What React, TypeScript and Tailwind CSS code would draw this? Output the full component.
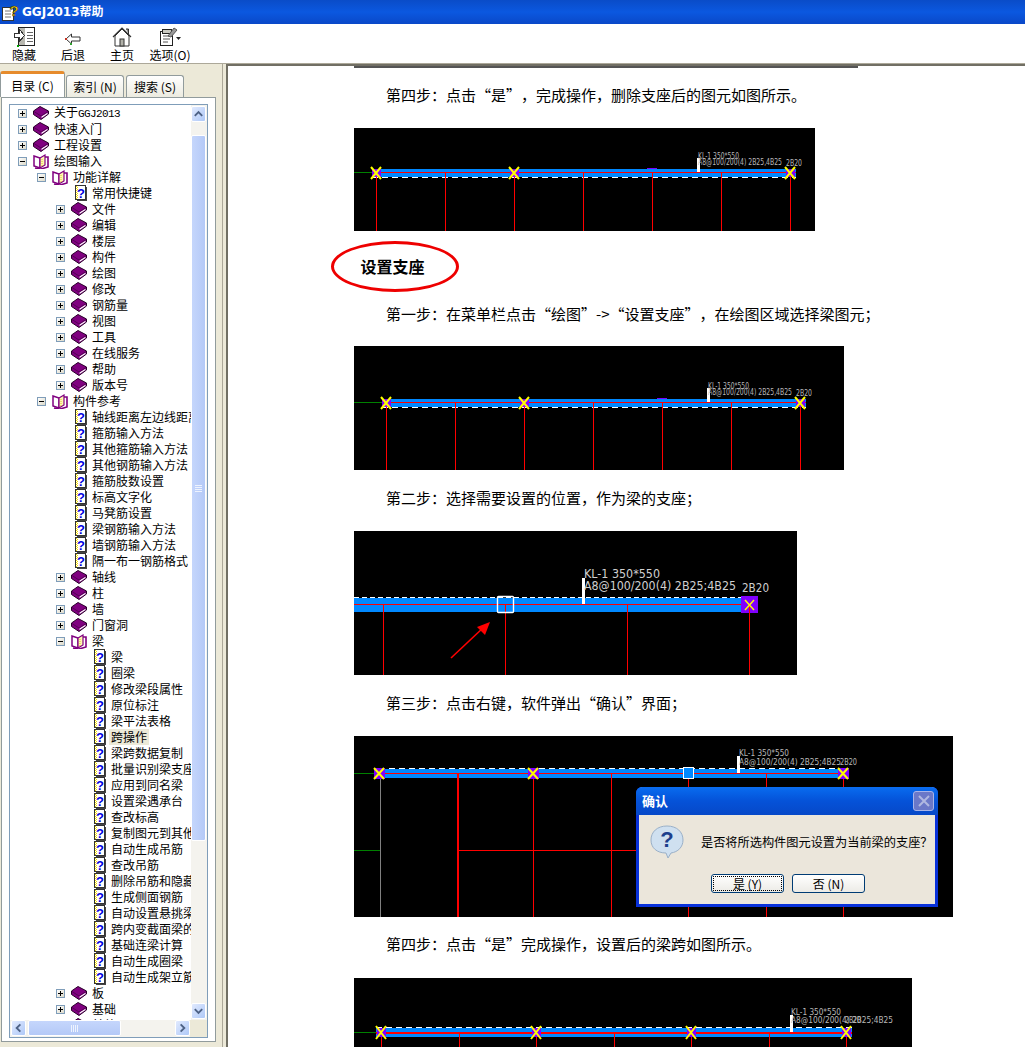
import type { ReactNode } from "react";

type TreeRow = [number, "book" | "open" | "page", ReactNode, boolean?];

const treeRows: TreeRow[] = [
  [0, "book", <>关于<span className="font-['Liberation_Mono',monospace] text-[11px] tracking-[-0.6px]">GGJ2013</span></>],
  [0, "book", "快速入门"],
  [0, "book", "工程设置"],
  [0, "open", "绘图输入"],
  [1, "open", "功能详解"],
  [2, "page", "常用快捷键"],
  [2, "book", "文件"],
  [2, "book", "编辑"],
  [2, "book", "楼层"],
  [2, "book", "构件"],
  [2, "book", "绘图"],
  [2, "book", "修改"],
  [2, "book", "钢筋量"],
  [2, "book", "视图"],
  [2, "book", "工具"],
  [2, "book", "在线服务"],
  [2, "book", "帮助"],
  [2, "book", "版本号"],
  [1, "open", "构件参考"],
  [2, "page", "轴线距离左边线距离"],
  [2, "page", "箍筋输入方法"],
  [2, "page", "其他箍筋输入方法"],
  [2, "page", "其他钢筋输入方法"],
  [2, "page", "箍筋肢数设置"],
  [2, "page", "标高文字化"],
  [2, "page", "马凳筋设置"],
  [2, "page", "梁钢筋输入方法"],
  [2, "page", "墙钢筋输入方法"],
  [2, "page", "隔一布一钢筋格式"],
  [2, "book", "轴线"],
  [2, "book", "柱"],
  [2, "book", "墙"],
  [2, "book", "门窗洞"],
  [2, "open", "梁"],
  [3, "page", "梁"],
  [3, "page", "圈梁"],
  [3, "page", "修改梁段属性"],
  [3, "page", "原位标注"],
  [3, "page", "梁平法表格"],
  [3, "page", "跨操作", true],
  [3, "page", "梁跨数据复制"],
  [3, "page", "批量识别梁支座"],
  [3, "page", "应用到同名梁"],
  [3, "page", "设置梁遇承台"],
  [3, "page", "查改标高"],
  [3, "page", "复制图元到其他"],
  [3, "page", "自动生成吊筋"],
  [3, "page", "查改吊筋"],
  [3, "page", "删除吊筋和隐藏"],
  [3, "page", "生成侧面钢筋"],
  [3, "page", "自动设置悬挑梁"],
  [3, "page", "跨内变截面梁的"],
  [3, "page", "基础连梁计算"],
  [3, "page", "自动生成圈梁"],
  [3, "page", "自动生成架立筋"],
  [2, "book", "板"],
  [2, "book", "基础"],
  [2, "book", "其他"],
];

const levelPadding = ["pl-[8px]", "pl-[27px]", "pl-[46px]", "pl-[65px]"];

function BookIcon() {
  return (
    <svg width="16" height="14" viewBox="0 0 16 14">
      <polygon points="0.5,5 7,0.5 15.5,5 15.5,8 8,13.5 0.5,8.5" fill="#800080" stroke="#2a002a" strokeWidth="1" />
      <polygon points="8.5,10.5 14.5,6.8 14.5,8 8.5,12" fill="#ffffff" />
      <path d="M1 5.5 L8 10 L15 5.5" fill="none" stroke="#4a004a" strokeWidth="0.8" />
    </svg>
  );
}

function OpenBookIcon() {
  return (
    <svg width="16" height="15" viewBox="0 0 16 15">
      <path d="M1 2 L7 4 L7 14 L1 12 Z" fill="#ffffff" stroke="#800080" strokeWidth="1.5" />
      <path d="M7 4 L12 1 L12 11 L7 14 Z" fill="#fff8b0" stroke="#800080" strokeWidth="1.2" />
      <path d="M12 3 L15 3 L15 13 L8 15" fill="none" stroke="#800080" strokeWidth="1.6" />
      <path d="M2 14 L7 15" fill="none" stroke="#800080" strokeWidth="1.6" />
      <path d="M9 5v7" stroke="#d8c030" strokeWidth="1" strokeDasharray="1 1" />
    </svg>
  );
}

function PageIcon() {
  return (
    <svg width="16" height="16" viewBox="0 0 16 16" shapeRendering="crispEdges">
      <rect x="4.5" y="0.5" width="10" height="14" fill="#ffffff" stroke="#333333" />
      <rect x="15" y="2" width="1" height="14" fill="#444444" />
      <rect x="6" y="15" width="10" height="1" fill="#444444" />
      <path d="M6 2h1v1h-1zM6 4h1v1h-1zM6 6h1v1h-1zM6 8h1v1h-1zM6 10h1v1h-1zM6 12h1v1h-1zM5 1h1v1h-1zM5 3h1v1h-1zM5 5h1v1h-1zM5 7h1v1h-1zM5 9h1v1h-1zM5 11h1v1h-1zM5 13h1v1h-1z" fill="#f4e000" />
      <text x="10" y="12.5" textAnchor="middle" fontSize="13" fontWeight="700" fill="#0000e0" fontFamily="Liberation Sans, sans-serif">?</text>
    </svg>
  );
}

function Expander({ open }: { open: boolean }) {
  return (
    <div className="relative h-[9px] w-[9px] border border-[#7f9db9] bg-linear-to-br from-white to-[#dcd9c8]">
      <div className="absolute left-[1px] top-[3px] h-px w-[5px] bg-black" />
      {!open && <div className="absolute left-[3px] top-[1px] h-[5px] w-px bg-black" />}
    </div>
  );
}

function TreeItem({ row }: { row: TreeRow }) {
  const [level, kind, label, selected] = row;
  return (
    <div className={`flex h-4 items-center whitespace-nowrap ${levelPadding[level]}`}>
      <div className="flex w-[9px] shrink-0 justify-center">
        {kind !== "page" && <Expander open={kind === "open"} />}
      </div>
      <div className="ml-[6px] flex w-4 shrink-0 items-center justify-center">
        {kind === "book" && <BookIcon />}
        {kind === "open" && <OpenBookIcon />}
        {kind === "page" && <PageIcon />}
      </div>
      <span className={selected ? "ml-[3px] bg-[#ece9d8] px-[2px] text-[12px] leading-4" : "ml-[5px] text-[12px] leading-4"}>
        {label}
      </span>
    </div>
  );
}

function ScrollButton({ dir }: { dir: "up" | "down" | "left" | "right" }) {
  const points = {
    up: "3,9 7,5 11,9",
    down: "3,5 7,9 11,5",
    left: "9,3 5,7 9,11",
    right: "5,3 9,7 5,11",
  }[dir];
  return (
    <div className="flex h-[16px] w-[15px] shrink-0 items-center justify-center rounded-[2px] border border-white bg-linear-to-br from-[#e1eafe] to-[#aec8f7]">
      <svg width="14" height="14" viewBox="0 0 14 14">
        <polyline points={points} fill="none" stroke="#4d6185" strokeWidth="2" />
      </svg>
    </div>
  );
}

function Sidebar() {
  return (
    <div className="flex w-[222px] shrink-0 flex-col bg-[#ece9d8] pt-[8px]">
      <div className="relative z-10 flex h-[25px] items-end text-[12px]">
        <div className="flex h-[26px] w-[65px] items-center justify-center rounded-t-[3px] border-x border-[#919b9c] border-t-[3px] border-t-[#e68b2c] bg-white">
          目录 (C)
        </div>
        <div className="ml-px flex h-[22px] w-[58px] items-center justify-center rounded-t-[3px] border-x border-t border-[#919b9c] bg-linear-to-b from-white to-[#ecebe0]">
          索引 (N)
        </div>
        <div className="ml-[2px] flex h-[22px] w-[58px] items-center justify-center rounded-t-[3px] border-x border-t border-[#919b9c] bg-linear-to-b from-white to-[#ecebe0]">
          搜索 (S)
        </div>
      </div>
      <div className="ml-px h-[945px] w-[215px] border border-[#919b9c] bg-white px-[7px] pt-[6px]">
        <div className="flex h-[934px] flex-col border border-[#7f9db9] bg-white">
          <div className="flex min-h-0 flex-1">
            <div className="min-w-0 flex-1 overflow-hidden pt-0">
              {treeRows.map((row, i) => (
                <TreeItem key={i} row={row} />
              ))}
            </div>
            <div className="flex w-[16px] shrink-0 flex-col bg-[#f4f3ee] py-px">
              <ScrollButton dir="up" />
              <div className="mt-[13px] flex h-[706px] w-[15px] items-center justify-center rounded-[2px] border border-white bg-linear-to-r from-[#c5d6fc] to-[#b4c9f7]">
                <div className="flex flex-col gap-px">
                  <div className="h-px w-[7px] bg-[#eef3fe]" />
                  <div className="h-px w-[7px] bg-[#eef3fe]" />
                  <div className="h-px w-[7px] bg-[#eef3fe]" />
                  <div className="h-px w-[7px] bg-[#eef3fe]" />
                </div>
              </div>
              <div className="flex-1" />
              <ScrollButton dir="down" />
            </div>
          </div>
          <div className="flex h-[17px] shrink-0 bg-[#f4f3ee] pl-px">
            <ScrollButton dir="left" />
            <div className="ml-[2px] flex h-[16px] w-[93px] items-center justify-center rounded-[2px] border border-white bg-linear-to-b from-[#c5d6fc] to-[#b4c9f7]">
              <div className="flex gap-px">
                <div className="h-[7px] w-px bg-[#eef3fe]" />
                <div className="h-[7px] w-px bg-[#eef3fe]" />
                <div className="h-[7px] w-px bg-[#eef3fe]" />
                <div className="h-[7px] w-px bg-[#eef3fe]" />
              </div>
            </div>
            <div className="flex-1" />
            <ScrollButton dir="right" />
            <div className="w-[17px] shrink-0 bg-[#ece9d8]" />
          </div>
        </div>
      </div>
    </div>
  );
}

function ToolButton({ label, icon, className }: { label: string; icon: ReactNode; className: string }) {
  return (
    <div className={`flex flex-col items-center ${className}`}>
      <div className="flex h-[22px] items-end">{icon}</div>
      <span className="whitespace-nowrap text-[12px] leading-4">{label}</span>
    </div>
  );
}

function HideIcon() {
  return (
    <svg width="21" height="20" viewBox="0 0 21 20" shapeRendering="crispEdges">
      <rect x="4.5" y="0.5" width="16" height="18" fill="#ffffff" stroke="#222222" />
      <rect x="5" y="1" width="6" height="17" fill="#b8b8b0" />
      <path d="M13 5h6M13 8h6M13 11h6M13 14h6" stroke="#666666" />
      <path d="M0.5 6.5h5v-4l5 6-5 6v-4h-5z" fill="#ffffff" stroke="#333333" />
      <rect x="3" y="18" width="2" height="2" fill="#00a000" />
    </svg>
  );
}

function BackIcon() {
  return (
    <svg width="16" height="12" viewBox="0 0 16 12" className="mb-[2px]">
      <path d="M1 6 L6.5 1 V4 H15 V8 H6.5 V11 Z" fill="#ffffff" stroke="#333333" />
      <rect x="0" y="5" width="2" height="2" fill="#c03020" />
      <rect x="5" y="10" width="2" height="2" fill="#30a030" />
    </svg>
  );
}

function HomeIcon() {
  return (
    <svg width="20" height="20" viewBox="0 0 20 20">
      <path d="M1 10 L10 1 L19 10" fill="none" stroke="#333333" strokeWidth="1.2" />
      <path d="M3 9 V19 H17 V9 L10 2 Z" fill="#ffffff" stroke="#333333" />
      <rect x="8" y="12" width="4" height="7" fill="#b0b0a8" stroke="#333333" />
      <path d="M14 2 h2.5 v5" fill="#888888" stroke="#333333" />
    </svg>
  );
}

function OptionsIcon() {
  return (
    <svg width="22" height="20" viewBox="0 0 22 20">
      <rect x="1.5" y="4.5" width="12" height="14" fill="#ffffff" stroke="#222222" />
      <rect x="3.5" y="2.5" width="9" height="4" fill="#c8c8c0" stroke="#222222" />
      <path d="M4 9h7M4 12h7M4 15h5" stroke="#555555" />
      <path d="M9 9 L15 1 L18 3 L12 10 Z" fill="#999999" stroke="#555555" />
      <polygon points="17,10 22,10 19.5,13" fill="#222222" />
    </svg>
  );
}

function TitleIcon() {
  return (
    <svg width="18" height="18" viewBox="0 0 18 18">
      <rect x="0.5" y="4.5" width="11" height="13" fill="#ffffff" stroke="#333333" />
      <path d="M3 8h6M3 11h6M3 14h6" stroke="#777777" />
      <text x="12" y="13" textAnchor="middle" fontSize="15" fontWeight="700" fill="#f8d800" stroke="#222222" strokeWidth="0.6" fontFamily="Liberation Sans, sans-serif">?</text>
    </svg>
  );
}

type BeamProps = {
  w: number;
  h: number;
  y: number;
  x1: number;
  x2: number;
  greenEnd: number;
  verticals: number[];
  nodes: number[];
  tick: number;
  title: string;
  rebar: string;
  rebarLength: number;
  tailX: number;
  tailY: number;
  mark?: number;
  dashTop?: boolean;
};

function BeamShot({ w, h, y, x1, x2, greenEnd, verticals, nodes, tick, title, rebar, rebarLength, tailX, tailY, mark, dashTop }: BeamProps) {
  const blueHeight = dashTop ? 9 : 8;
  const redY = dashTop ? y + 4 : y + 3;
  const dashY = dashTop ? y - 0.5 : y + 8.5;
  const tickTop = dashTop ? y - 13 : y - 11;
  const titleLength = dashTop ? 50 : 41;
  return (
    <svg width={w} height={h} viewBox={`0 0 ${w} ${h}`} className="block bg-black" fontFamily="DejaVu Sans, sans-serif">
      <rect x={0} y={redY} width={greenEnd} height={1} fill="#008000" shapeRendering="crispEdges" />
      <rect x={x1} y={y} width={x2 - x1} height={blueHeight} fill="#0088ff" shapeRendering="crispEdges" />
      <line x1={x1} x2={x2} y1={dashY} y2={dashY} stroke="#ffffff" strokeDasharray="6 4" shapeRendering="crispEdges" />
      {mark !== undefined && <rect x={mark - 5} y={y - 1} width={10} height={1} fill="#8000ff" shapeRendering="crispEdges" />}
      <rect x={greenEnd} y={redY} width={x2 - greenEnd} height={dashTop ? 2 : 1} fill="#ff0000" shapeRendering="crispEdges" />
      {verticals.map((v) => (
        <rect key={v} x={v} y={redY} width={1} height={h - redY} fill="#ff0000" shapeRendering="crispEdges" />
      ))}
      {nodes.map((n) => (
        <g key={n}>
          <rect x={n - 4} y={y} width={9} height={blueHeight} fill="#8000ff" shapeRendering="crispEdges" />
          <path d={`M${n - 5} ${y - 2} L${n + 5} ${y + blueHeight + 2} M${n + 5} ${y - 2} L${n - 5} ${y + blueHeight + 2}`} stroke="#ffff00" strokeWidth="2" />
        </g>
      ))}
      <rect x={tick} y={tickTop} width={3} height={dashTop ? 17 : 14} fill="#ffffff" shapeRendering="crispEdges" />
      <text x={tick + 1} y={dashTop ? y - 13 : y - 10} fontSize={dashTop ? 9 : 8} fill="#b8b8b8" textLength={titleLength} lengthAdjust="spacingAndGlyphs">{title}</text>
      <text x={tick + 1} y={dashTop ? y - 5 : y - 4} fontSize={dashTop ? 9 : 8} fill="#b8b8b8" textLength={rebarLength} lengthAdjust="spacingAndGlyphs">{rebar}</text>
      <text x={tailX} y={tailY} fontSize="8" fill="#b8b8b8" textLength={16} lengthAdjust="spacingAndGlyphs">2B20</text>
    </svg>
  );
}

function ArrowShot() {
  return (
    <svg width="443" height="144" viewBox="0 0 443 144" className="block bg-black" fontFamily="DejaVu Sans, sans-serif">
      <rect x="0" y="67" width="392" height="14" fill="#0088ff" shapeRendering="crispEdges" />
      <line x1="0" x2="392" y1="66.5" y2="66.5" stroke="#ffffff" strokeDasharray="5 3" shapeRendering="crispEdges" />
      <rect x="0" y="73" width="392" height="1" fill="#ff0000" shapeRendering="crispEdges" />
      <rect x="387" y="65" width="17" height="17" fill="#8000ff" shapeRendering="crispEdges" />
      {[29, 151, 273, 395].map((v) => (
        <rect key={v} x={v} y="73" width="1" height="71" fill="#ff0000" shapeRendering="crispEdges" />
      ))}
      <path d="M391 69 L400 79 M400 69 L391 79" stroke="#ffff00" strokeWidth="1.5" />
      <rect x="143.5" y="65.5" width="16" height="16" rx="1" fill="none" stroke="#ffffff" strokeWidth="1.4" />
      <rect x="228" y="47" width="3" height="26" fill="#ffffff" shapeRendering="crispEdges" />
      <text x="230" y="47" fontSize="12" fill="#d0d0d0" textLength={76} lengthAdjust="spacingAndGlyphs">KL-1 350*550</text>
      <text x="230" y="59" fontSize="12" fill="#d0d0d0" textLength={152} lengthAdjust="spacingAndGlyphs">A8@100/200(4) 2B25;4B25</text>
      <text x="388" y="61" fontSize="12" fill="#d0d0d0" textLength={27} lengthAdjust="spacingAndGlyphs">2B20</text>
      <line x1="97" y1="127" x2="130" y2="96" stroke="#ff0000" strokeWidth="1.6" />
      <polygon points="136,91 123,96 131,104" fill="#ff0000" />
    </svg>
  );
}

function ConfirmDialog() {
  return (
    <div className="absolute left-[282px] top-[51px] flex h-[120px] w-[302px] flex-col rounded-t-[6px] border-x-[3px] border-b-[3px] border-[#0831d9] bg-[#ebe6db]">
      <div className="-mx-[3px] flex h-[28px] shrink-0 items-center justify-between rounded-t-[6px] bg-linear-to-b from-[#0a6cf0] via-[#0552d8] to-[#0648c8] pl-[6px] pr-[4px]">
        <span className="text-[13px] font-bold text-white">确认</span>
        <div className="flex h-[20px] w-[21px] items-center justify-center rounded-[3px] border border-[#a8b4e8] bg-[#6a78c8]">
          <svg width="12" height="12" viewBox="0 0 12 12">
            <path d="M1 1 L11 11 M11 1 L1 11" stroke="#b0b8e0" strokeWidth="2" />
          </svg>
        </div>
      </div>
      <div className="flex items-center pl-[11px] pt-[10px]">
        <svg width="34" height="34" viewBox="0 0 34 34">
          <path d="M17 1 C27 1 33 7 33 15 C33 22 28 27 21 28 L18 33 L16 28 C7 28 1 23 1 15 C1 7 7 1 17 1 Z" fill="#cfe0f0" stroke="#9ab0c8" />
          <text x="17" y="22" textAnchor="middle" fontSize="22" fontWeight="700" fill="#1c3f8c" fontFamily="Liberation Sans, sans-serif">?</text>
        </svg>
        <span className="ml-[17px] whitespace-nowrap text-[12.2px] leading-4">是否将所选构件图元设置为当前梁的支座？</span>
      </div>
      <div className="mt-[15px] flex justify-center gap-[8px] pl-[2px] text-[12px]">
        <div className="flex h-[19px] w-[73px] items-center justify-center rounded-[3px] border border-[#003c74] bg-linear-to-b from-white to-[#ecebe6] outline-1 -outline-offset-3 outline-dotted outline-black">
          是 (Y)
        </div>
        <div className="flex h-[19px] w-[73px] items-center justify-center rounded-[3px] border border-[#003c74] bg-linear-to-b from-white to-[#ecebe6]">
          否 (N)
        </div>
      </div>
    </div>
  );
}

function Step({ className, children }: { className: string; children: ReactNode }) {
  return <p className={`ml-[55px] h-5 whitespace-nowrap text-[15px] leading-[18px] text-black [text-spacing-trim:space-all] ${className}`}>{children}</p>;
}

function Article() {
  return (
    <div className="flex min-w-0 flex-1 flex-col overflow-hidden border-l-2 border-t-2 border-[#716f64] bg-white pl-[103px]">
      <div className="ml-[23px] h-[2px] w-[504px] bg-[#555555]" />
      <Step className="mt-[18px]">第四步：点击“是”，完成操作，删除支座后的图元如图所示。</Step>
      <div className="ml-[23px] mt-[22px]">
        <BeamShot w={461} h={103} y={41} x1={18} x2={442} greenEnd={18} verticals={[22, 91, 160, 229, 298, 367, 436]} nodes={[22, 160, 436]} tick={343} title="KL-1 350*550" rebar="A8@100/200(4) 2B25,4B25" rebarLength={84} tailX={432} tailY={38} mark={298} />
      </div>
      <div className="mt-[10px] flex h-[51px] w-[128px] items-center justify-center rounded-[50%] border-[3px] border-[#ee0000] pb-[2px] pr-[5px] text-[16px] font-bold text-black">
        设置支座
      </div>
      <Step className="mt-[13px]">第一步：在菜单栏点击“绘图”-&gt;“设置支座”，在绘图区域选择梁图元；</Step>
      <div className="ml-[23px] mt-[21px]">
        <BeamShot w={490} h={124} y={53} x1={28} x2={452} greenEnd={28} verticals={[32, 101, 170, 239, 308, 377, 446]} nodes={[32, 170, 446]} tick={353} title="KL-1 350*550" rebar="A8@100/200(4) 2B25,4B25" rebarLength={84} tailX={442} tailY={50} mark={308} />
      </div>
      <Step className="mt-[19px]">第二步：选择需要设置的位置，作为梁的支座；</Step>
      <div className="ml-[23px] mt-[22px]">
        <ArrowShot />
      </div>
      <Step className="mt-[19px]">第三步：点击右键，软件弹出“确认”界面；</Step>
      <div className="relative ml-[23px] mt-[22px] w-[599px]">
        <svg width="599" height="181" viewBox="0 0 599 181" className="block bg-black" fontFamily="DejaVu Sans, sans-serif">
          <rect x="0" y="37" width="20" height="1" fill="#008000" shapeRendering="crispEdges" />
          <rect x="0" y="114" width="26" height="1" fill="#008000" shapeRendering="crispEdges" />
          <rect x="25" y="33" width="464" height="9" fill="#0088ff" shapeRendering="crispEdges" />
          <line x1="25" x2="489" y1="32.5" y2="32.5" stroke="#ffffff" strokeDasharray="6 4" shapeRendering="crispEdges" />
          <rect x="25" y="37" width="464" height="1" fill="#ff0000" shapeRendering="crispEdges" />
          <rect x="103" y="114" width="180" height="1" fill="#ff0000" shapeRendering="crispEdges" />
          <rect x="26" y="42" width="1" height="139" fill="#808080" shapeRendering="crispEdges" />
          {[179, 257, 334, 412, 489].map((v) => (
            <rect key={v} x={v} y="37" width="1" height="144" fill="#ff0000" shapeRendering="crispEdges" />
          ))}
          <rect x="103" y="37" width="2" height="144" fill="#ff0000" shapeRendering="crispEdges" />
          {[25, 179, 489].map((n) => (
            <g key={n}>
              <rect x={n - 5} y="32" width="11" height="11" fill="#8000ff" shapeRendering="crispEdges" />
              <path d={`M${n - 5} 32 L${n + 5} 43 M${n + 5} 32 L${n - 5} 43`} stroke="#ffff00" strokeWidth="2" />
            </g>
          ))}
          <rect x="329.5" y="31.5" width="10" height="11" fill="#0088ff" stroke="#ffffff" shapeRendering="crispEdges" />
          <rect x="383" y="20" width="3" height="17" fill="#ffffff" shapeRendering="crispEdges" />
          <text x="385" y="20" fontSize="8" fill="#b8b8b8" textLength={50} lengthAdjust="spacingAndGlyphs">KL-1 350*550</text>
          <text x="385" y="29" fontSize="8" fill="#b8b8b8" textLength={102} lengthAdjust="spacingAndGlyphs">A8@100/200(4) 2B25;4B25</text>
          <text x="486" y="29" fontSize="8" fill="#b8b8b8" textLength={17} lengthAdjust="spacingAndGlyphs">2B20</text>
        </svg>
        <ConfirmDialog />
      </div>
      <Step className="mt-[18px]">第四步：点击“是”完成操作，设置后的梁跨如图所示。</Step>
      <div className="ml-[23px] mt-[23px] shrink-0">
        <BeamShot w={558} h={69} y={50} x1={22} x2={498} greenEnd={22} verticals={[27, 105, 182, 260, 337, 415, 492]} nodes={[27, 182, 337, 492]} tick={436} title="KL-1 350*550" rebar="A8@100/200(4) 2B25;4B25" rebarLength={102} tailX={491} tailY={45} dashTop />
      </div>
    </div>
  );
}

export default function App() {
  return (
    <div className="flex h-[1047px] w-[1025px] flex-col overflow-hidden bg-[#ece9d8] font-['Noto_Sans_CJK_SC','Liberation_Sans',sans-serif] text-black">
      <div className="flex h-6 shrink-0 items-center bg-linear-to-b from-[#0a4cc8] via-[#0b58e0] to-[#0a48c8] pl-[2px]">
        <TitleIcon />
        <span className="ml-[2px] font-['DejaVu_Sans','Noto_Sans_CJK_SC',sans-serif] text-[12px] font-bold text-white">GGJ2013帮助</span>
      </div>
      <div className="flex h-10 shrink-0 border-b border-[#aca899] bg-white pt-[2px]">
        <ToolButton label="隐藏" icon={<HideIcon />} className="ml-[12px] w-6" />
        <ToolButton label="后退" icon={<BackIcon />} className="ml-[25px] w-6" />
        <ToolButton label="主页" icon={<HomeIcon />} className="ml-[25px] w-6" />
        <ToolButton label="选项(O)" icon={<OptionsIcon />} className="ml-[15px] w-[42px]" />
      </div>
      <div className="flex min-h-0 flex-1">
        <Sidebar />
        <div className="w-[4px] shrink-0 border-l border-[#aca899] bg-[#ece9d8]" />
        <Article />
      </div>
    </div>
  );
}
